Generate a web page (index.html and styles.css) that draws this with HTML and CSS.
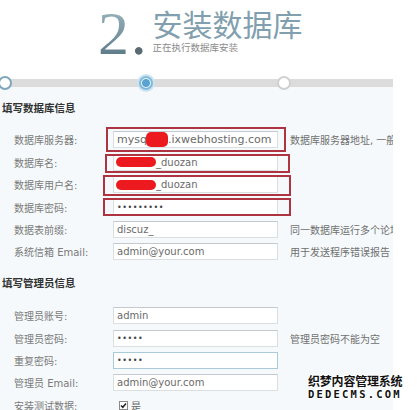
FILE: index.html
```html
<!DOCTYPE html>
<html lang="zh-CN">
<head>
  <meta charset="UTF-8" />
  <title>安装数据库</title>
  <link rel="stylesheet" href="styles.css">
</head>
<body>

  <div class="header">
    <div class="step-no">2<span class="dot">.</span></div>
    <div class="step-text">
      <div class="step-title">安装数据库</div>
      <div class="step-sub">正在执行数据库安装</div>
    </div>
  </div>

  <div class="steps">
    <span class="node done"></span>
    <span class="node current"></span>
    <span class="node todo"></span>
  </div>

  <div class="panel">
    <div class="section-title">填写数据库信息</div>

    <div class="row">
      <span class="label">数据库服务器:</span>
      <span class="field">
        <span class="input big">mysq<i class="blot small"></i>.ixwebhosting.com</span>
        <span class="mark mark-a"></span>
      </span>
      <span class="help">数据库服务器地址, 一般为 localhost</span>
    </div>
    <div class="row">
      <span class="label">数据库名:</span>
      <span class="field">
        <span class="input"><i class="blot wide"></i>_duozan</span>
        <span class="mark mark-b"></span>
      </span>
    </div>
    <div class="row">
      <span class="label">数据库用户名:</span>
      <span class="field">
        <span class="input"><i class="blot wide"></i>_duozan</span>
        <span class="mark mark-c"></span>
      </span>
    </div>
    <div class="row">
      <span class="label">数据库密码:</span>
      <span class="field">
        <span class="input pass">•••••••••</span>
        <span class="mark mark-d"></span>
      </span>
    </div>
    <div class="row">
      <span class="label">数据表前缀:</span>
      <span class="field"><span class="input">discuz_</span></span>
      <span class="help">同一数据库运行多个论坛时，请修改前缀</span>
    </div>
    <div class="row">
      <span class="label">系统信箱 Email:</span>
      <span class="field"><span class="input">admin@your.com</span></span>
      <span class="help">用于发送程序错误报告</span>
    </div>

    <div class="section-title second">填写管理员信息</div>

    <div class="row">
      <span class="label">管理员账号:</span>
      <span class="field"><span class="input">admin</span></span>
    </div>
    <div class="row">
      <span class="label">管理员密码:</span>
      <span class="field"><span class="input pass">•••••</span></span>
      <span class="help">管理员密码不能为空</span>
    </div>
    <div class="row">
      <span class="label">重复密码:</span>
      <span class="field"><span class="input pass focus">•••••</span></span>
    </div>
    <div class="row">
      <span class="label">管理员 Email:</span>
      <span class="field"><span class="input">admin@your.com</span></span>
    </div>
    <div class="row">
      <span class="label">安装测试数据:</span>
      <span class="check">
        <svg width="9" height="9" viewBox="0 0 9 9"><rect x="0.5" y="0.5" width="8" height="8" fill="#fff" stroke="#8a8a8a"/><path d="M2 4.5 L3.8 6.3 L7 2.5" fill="none" stroke="#222" stroke-width="1.5"/></svg>
        是
      </span>
    </div>
  </div>

  <div class="watermark">
    <div class="wm-cn">织梦内容管理系统</div>
    <div class="wm-en">DEDECMS.COM</div>
  </div>

</body>
</html>
```

FILE: styles.css
```css
* {
  box-sizing: border-box;
}

body {
  margin: 0;
  width: 417px;
  height: 410px;
  overflow: hidden;
  position: relative;
  background: #fff;
  font-family: 'DejaVu Sans', 'Noto Sans CJK SC', sans-serif;
  color: #666;
}

.header {
  height: 79px;
  display: flex;
  padding-left: 98px;
}

.step-no {
  flex: none;
  font-family: 'Liberation Serif', serif;
  font-size: 62px;
  line-height: 66px;
  height: 66px;
  background: linear-gradient(#a4bec8, #4f6f7c);
  -webkit-background-clip: text;
  background-clip: text;
  color: transparent;
}

.step-no .dot {
  color: #5b6b72;
  margin-left: 2px;
}

.step-text {
  flex: none;
  margin-left: 6px;
  padding-top: 6px;
}

.step-title {
  font-family: 'Noto Sans CJK SC', sans-serif;
  font-size: 30px;
  line-height: 34px;
  letter-spacing: 0;
  color: #819fae;
  white-space: nowrap;
}

.step-sub {
  font-family: 'Noto Sans CJK SC', sans-serif;
  font-size: 9.5px;
  line-height: 12px;
  margin-top: 1px;
  color: #8a8a8a;
  white-space: nowrap;
}

.steps {
  width: 393px;
  height: 8px;
  background: #dcdcdc;
  display: flex;
  align-items: center;
}

.node {
  width: 14px;
  height: 14px;
  border-radius: 50%;
  background: #fff;
  flex: none;
}

.node.done {
  margin-left: -2px;
  border: 2px solid #7ea6ba;
}

.node.current {
  margin-left: 127px;
  border: 2px solid #7dbadc;
  background: radial-gradient(circle, #5aa2cf 0 3.5px, #e6f3fa 4.5px);
  box-shadow: 0 0 0 2px #cde4f0;
}

.node.todo {
  margin-left: 124px;
  border: 2px solid #d0d0d0;
}

.panel {
  width: 393px;
  height: 323px;
  background: #f5f9fb;
  overflow: hidden;
  padding-top: 14px;
}

.section-title {
  padding-left: 2px;
  font-family: 'Noto Sans CJK SC', sans-serif;
  font-weight: bold;
  font-size: 10.5px;
  line-height: 14px;
  color: #333;
  margin-bottom: 13.75px;
}

.section-title.second {
  margin-top: 12.75px;
  margin-bottom: 14.75px;
}

.row {
  height: 22.4px;
  display: flex;
  align-items: center;
  padding-left: 14px;
  white-space: nowrap;
}

.label {
  width: 99px;
  flex: none;
  font-size: 10px;
  color: #7a7a7a;
}

.field {
  position: relative;
  flex: none;
  width: 165px;
}

.input {
  display: flex;
  align-items: center;
  height: 17px;
  padding-left: 3px;
  background: #fff;
  border: 1px solid #dadfe2;
  border-top-color: #c3c9cd;
  font-size: 10px;
  color: #6a6a6a;
  overflow: hidden;
}

.input.big {
  font-size: 11px;
}

.input.pass {
  font-size: 8px;
  letter-spacing: 0.5px;
  color: #444;
}

.input.focus {
  border-color: #a9c9dc;
}

.blot {
  display: inline-block;
  background: #ec1a1f;
  flex: none;
}

.blot.small {
  width: 22px;
  height: 15px;
  border-radius: 5px;
  margin: 0 0 0 -1px;
}

.blot.wide {
  width: 40px;
  height: 10px;
  border-radius: 5px;
  margin-left: -1px;
}

.mark {
  position: absolute;
  border: 2px solid #ad3440;
  pointer-events: none;
}

.mark-a { left: -7px; right: -8px; top: -4.5px; bottom: -3.5px; }
.mark-b { left: -8px; right: -12px; top: 0; bottom: -2px; }
.mark-c { left: -10px; right: -13px; top: -1px; bottom: -3px; }
.mark-d { left: -10px; right: -13px; top: -0.5px; bottom: -0.5px; }

.help {
  margin-left: 12px;
  font-size: 10px;
  color: #707070;
}

.check {
  display: flex;
  align-items: center;
  gap: 3px;
  margin-left: 6px;
  font-size: 10px;
  color: #666;
}

.watermark {
  position: absolute;
  left: 308px;
  top: 373px;
  color: #111;
  text-shadow: 1px 0 #fff, -1px 0 #fff, 0 1px #fff, 0 -1px #fff, 1px 1px #fff, -1px -1px #fff;
}

.wm-cn {
  font-family: 'Noto Sans CJK SC', sans-serif;
  font-weight: bold;
  font-size: 12px;
  line-height: 15px;
  letter-spacing: -0.2px;
}

.wm-en {
  font-family: 'DejaVu Sans Mono', monospace;
  font-weight: bold;
  font-size: 10.5px;
  line-height: 12px;
  letter-spacing: 2.2px;
}
```
